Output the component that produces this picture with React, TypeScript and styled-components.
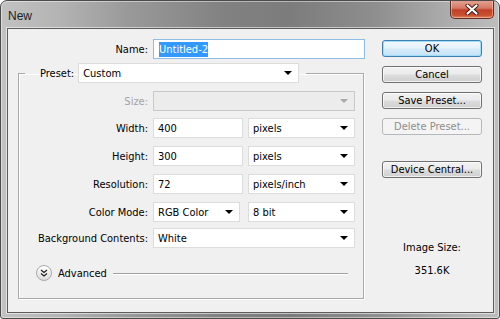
import styled, { createGlobalStyle, css } from 'styled-components';

const GlobalStyle = createGlobalStyle`
  html, body {
    margin: 0;
    padding: 0;
    background: #ffffff;
  }
  body {
    width: 500px;
    height: 319px;
    overflow: hidden;
    font-family: "DejaVu Sans Condensed", "Liberation Sans", sans-serif;
    font-size: 11px;
    color: #000;
  }
`

const Window = styled.div`
  width: 500px;
  height: 319px;
  box-sizing: border-box;
  display: flex;
  flex-direction: column;
  border: 1px solid #4b4b4b;
  border-radius: 7px 7px 3px 3px;
  background: linear-gradient(90deg, #c2c2c2 0%, #b3b3b3 12%, #9a9a9a 25%, #818181 45%, #7c7c7c 58%, #8e8e8e 75%, #adadad 90%, #bdbdbd 100%);
  box-shadow: inset 0 0 0 1px rgba(255, 255, 255, 0.45);
  overflow: hidden;
`

const TitleBar = styled.div`
  height: 27px;
  flex: none;
  display: flex;
  align-items: flex-start;
  justify-content: space-between;
  padding-left: 7px;
`

const Title = styled.div`
  margin-top: 8px;
  font-family: "Liberation Sans", sans-serif;
  font-size: 12px;
  color: #202020;
`

const CloseButton = styled.div`
  width: 44px;
  height: 19px;
  margin-right: 5px;
  margin-top: -1px;
  box-sizing: border-box;
  display: flex;
  align-items: center;
  justify-content: center;
  border: 1px solid #6b2a1e;
  border-top: none;
  border-radius: 0 0 5px 5px;
  background: linear-gradient(180deg, #e6a594 0%, #d47a66 45%, #c2402a 55%, #c9502f 85%, #de8a63 100%);
  box-shadow: inset 0 0 0 1px rgba(255, 220, 210, 0.45);
`

const Frame = styled.div`
  flex: 1;
  display: flex;
  padding: 0 5px 5px 6px;
`

const Client = styled.div`
  flex: 1;
  display: flex;
  background: #f0f0f0;
  border: 1px solid #5c5c5c;
  box-shadow: 0 0 0 1px rgba(255, 255, 255, 0.55);
  padding: 10px 10px 0 10px;
  gap: 16px;
`

const LeftColumn = styled.div`
  width: 348px;
  display: flex;
  flex-direction: column;
`

const RightColumn = styled.div`
  width: 100px;
  display: flex;
  flex-direction: column;
  padding-top: 1px;
`

const Row = styled.div<{ $top?: number; $label?: number }>`
  display: grid;
  grid-template-columns: ${p => p.$label ?? 129}px auto;
  column-gap: 5px;
  align-items: center;
  margin-top: ${p => p.$top ?? 0}px;
`

const Label = styled.div<{ $disabled?: boolean }>`
  text-align: right;
  white-space: nowrap;
  color: ${p => (p.$disabled ? '#a3a3a3' : '#000')};
`

const Fields = styled.div<{ $gap?: number }>`
  display: flex;
  gap: ${p => p.$gap ?? 5}px;
`

const fieldBase = css`
  box-sizing: border-box;
  height: 20px;
  display: flex;
  align-items: center;
  padding-left: 4px;
  background: #fff;
  border: 1px solid #dcdcdc;
  white-space: nowrap;
`

const TextField = styled.div<{ $w: number; $focus?: boolean }>`
  ${fieldBase};
  width: ${p => p.$w}px;
  ${p => p.$focus && css`
    border-color: #8fbde3;
    padding-left: 5px;
  `}
`

const Selected = styled.span`
  background: #3399ff;
  color: #fff;
  padding: 1px 0;
`

const Select = styled.div<{ $w: number; $disabled?: boolean }>`
  ${fieldBase};
  width: ${p => p.$w}px;
  justify-content: space-between;
  padding-right: 6px;
  ${p => p.$disabled && css`
    background: #ececec;
    border-color: #c9c9c9;
  `}
`

const Arrow = styled.span<{ $disabled?: boolean }>`
  width: 0;
  height: 0;
  border-left: 4px solid transparent;
  border-right: 4px solid transparent;
  border-top: 4px solid ${p => (p.$disabled ? '#a8a8a8' : '#000')};
`

const Group = styled.fieldset`
  width: 346px;
  box-sizing: border-box;
  margin: 4px 0 0 0;
  padding: 8px 0 17px 0;
  border: 1px solid #a9a9a9;
  box-shadow: inset 1px 1px 0 #fff, 1px 1px 0 #fff;
  min-width: 0;
`

const Legend = styled.legend`
  margin-left: 6px;
  padding: 0 7px 0 15px;
  display: flex;
  align-items: center;
  gap: 4px;
`

const AdvancedRow = styled.div`
  display: flex;
  align-items: center;
  margin-top: 17px;
  padding: 0 15px 0 17px;
  gap: 6px;
`

const Rule = styled.div`
  flex: 1;
  height: 1px;
  background: #a0a0a0;
  box-shadow: 0 1px 0 #fff;
`

const Button = styled.div<{ $variant?: 'default' | 'disabled'; $top?: number }>`
  box-sizing: border-box;
  width: 100px;
  height: 17px;
  margin-top: ${p => p.$top ?? 0}px;
  display: flex;
  align-items: center;
  justify-content: center;
  border: 1px solid #707070;
  border-radius: 3px;
  background: linear-gradient(180deg, #f2f2f2 0%, #ebebeb 48%, #dddddd 52%, #cfcfcf 100%);
  box-shadow: inset 0 0 0 1px rgba(255, 255, 255, 0.7);
  color: #000;
  ${p => p.$variant === 'default' && css`
    border-color: #3c7fb1;
    background: linear-gradient(180deg, #f1f8fd 0%, #e5f2fb 48%, #d6ebf8 52%, #c6e3f6 100%);
    box-shadow: inset 0 0 0 1px #9fdcf8;
  `}
  ${p => p.$variant === 'disabled' && css`
    border-color: #b5b8ba;
    background: #f4f4f4;
    box-shadow: none;
    color: #8d8d8d;
  `}
`

const ImageSize = styled.div`
  margin-top: 63px;
  display: flex;
  flex-direction: column;
  align-items: center;
  gap: 9px;
  line-height: 14px;
`

const CloseIcon = () => (
  <svg width="14" height="11" viewBox="0 0 14 11">
    <path d="M2.5 1.5 L11.5 9.5 M11.5 1.5 L2.5 9.5" stroke="#3f1a12" strokeWidth="4" strokeLinecap="round" />
    <path d="M2.5 1.5 L11.5 9.5 M11.5 1.5 L2.5 9.5" stroke="#ffffff" strokeWidth="2.2" strokeLinecap="round" />
  </svg>
)

const ExpandIcon = () => (
  <svg width="16" height="16" viewBox="0 0 16 16">
    <defs>
      <linearGradient id="adv" x1="0" y1="0" x2="0" y2="1">
        <stop offset="0" stopColor="#ffffff" />
        <stop offset="1" stopColor="#dcdcdc" />
      </linearGradient>
    </defs>
    <circle cx="8" cy="8" r="7.5" fill="url(#adv)" stroke="#a8a8a8" />
    <path d="M5 5 L8 7.5 L11 5 M5 8.5 L8 11 L11 8.5" fill="none" stroke="#222" strokeWidth="1.2" />
  </svg>
)

export default function App() {
  return (
    <>
      <GlobalStyle />
      <Window>
        <TitleBar>
          <Title>New</Title>
          <CloseButton><CloseIcon /></CloseButton>
        </TitleBar>
        <Frame>
          <Client>
            <LeftColumn>
              <Row $label={130}>
                <Label>Name:</Label>
                <TextField $w={212} $focus><Selected>Untitled-2</Selected></TextField>
              </Row>
              <Group>
                <Legend>
                  <Label>Preset:</Label>
                  <Select $w={221}>Custom<Arrow /></Select>
                </Legend>
                <Row>
                  <Label $disabled>Size:</Label>
                  <Select $w={202} $disabled><span /><Arrow $disabled /></Select>
                </Row>
                <Row $top={7}>
                  <Label>Width:</Label>
                  <Fields>
                    <TextField $w={90}>400</TextField>
                    <Select $w={107}>pixels<Arrow /></Select>
                  </Fields>
                </Row>
                <Row $top={8}>
                  <Label>Height:</Label>
                  <Fields>
                    <TextField $w={90}>300</TextField>
                    <Select $w={107}>pixels<Arrow /></Select>
                  </Fields>
                </Row>
                <Row $top={8}>
                  <Label>Resolution:</Label>
                  <Fields>
                    <TextField $w={90}>72</TextField>
                    <Select $w={107}>pixels/inch<Arrow /></Select>
                  </Fields>
                </Row>
                <Row $top={8}>
                  <Label>Color Mode:</Label>
                  <Fields $gap={8}>
                    <Select $w={87}>RGB Color<Arrow /></Select>
                    <Select $w={107}>8 bit<Arrow /></Select>
                  </Fields>
                </Row>
                <Row $top={6}>
                  <Label>Background Contents:</Label>
                  <Select $w={202}>White<Arrow /></Select>
                </Row>
                <AdvancedRow>
                  <ExpandIcon />
                  <span>Advanced</span>
                  <Rule />
                </AdvancedRow>
              </Group>
            </LeftColumn>
            <RightColumn>
              <Button $variant="default">OK</Button>
              <Button $top={9}>Cancel</Button>
              <Button $top={9}>Save Preset...</Button>
              <Button $top={9} $variant="disabled">Delete Preset...</Button>
              <Button $top={26}>Device Central...</Button>
              <ImageSize>
                <span>Image Size:</span>
                <span>351.6K</span>
              </ImageSize>
            </RightColumn>
          </Client>
        </Frame>
      </Window>
    </>
  );
}
